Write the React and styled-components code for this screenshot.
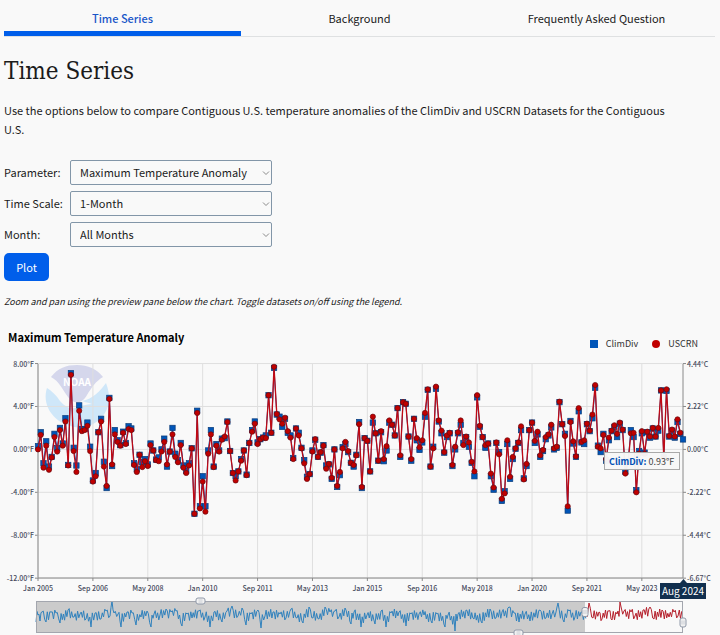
import React from 'react';
import styled, { createGlobalStyle } from 'styled-components';

const GlobalStyle = createGlobalStyle`
  * {
    box-sizing: border-box;
  }

  body {
    margin: 0;
    background: #f9f9f9;
    color: #1b1b1b;
    font-family: 'Noto Sans CJK SC', 'Noto Sans', sans-serif;
    font-size: 11px;
    line-height: 19px;
    overflow-x: hidden;
  }
`;

const tabs = ['Time Series', 'Background', 'Frequently Asked Question'];

const fields = [
  { id: 'parameter', label: 'Parameter:', options: ['Maximum Temperature Anomaly', 'Minimum Temperature Anomaly'] },
  { id: 'timescale', label: 'Time Scale:', options: ['1-Month', '3-Month', '12-Month'] },
  { id: 'month', label: 'Month:', options: ['All Months', 'January', 'February'] },
];

// Monthly anomalies in °F, one row per year from January 2005: [ClimDiv, USCRN]
const anomalies = [
  [0.3, 0], [1.6, 1.35], [-1.3, -1.7], [0.75, 0.35], [-1.6, -1.9], [-0.7, -0.75], [1.45, 1.15], [0.1, -0.2], [2, 1.8], [0.55, 0.35], [2.9, 2.6], [-1.45, -1.5],
  [7.1, 6.95], [0.15, -0.15], [-1.5, -2.1], [4.1, 3.6], [1.9, 1.7], [1.9, 1.8], [2.5, 2.2], [0.25, -0.15], [-2.9, -3], [-2.2, -2.5], [1.6, 1.6], [2.85, 2.6],
  [-1.15, -1.6], [-3.6, -3.4], [4.8, 4.7], [-1.55, -1.4], [1.8, 1.4], [0.85, 0.7], [0.4, 0.35], [1.65, 1.55], [0.6, 0.5], [2.15, 1.9], [1.95, 1.8], [-1.3, -1.45],
  [-1.85, -2.1], [-0.5, -0.5], [-1.2, -1.65], [-0.9, -1.1], [-1.4, -1.55], [0.55, 0.4], [-0.1, -0.1], [-0.95, -1], [-0.75, -1.1], [0, -0.2], [1, 0.7], [-1.6, -1.4],
  [-0.2, -0.2], [2, 1.4], [-0.4, -0.7], [-1, -1.2], [0.6, 0.4], [-1.5, -1.7], [-2, -2.2], [-1.3, -1.5], [0.1, 0.1], [-6, -6], [3.6, 3.4], [-5.3, -5.5],
  [-2.5, -3], [-5.3, -5.8], [-0.1, -0.4], [1.8, 1.4], [-1.6, -1.65], [0.5, 0.35], [-0.1, -0.2], [1, 0.9], [1.05, 1.2], [2.6, 2.55], [-0.15, -0.15], [-2.2, -2.2],
  [-2.5, -2.9], [-2.05, -2.05], [-0.9, -1.05], [-0.1, -0.1], [-2.35, -2.4], [0.6, 0.6], [1.8, 1.65], [2.6, 2.4], [0.65, 0.5], [0.95, 0.95], [1.1, 1.1], [1.3, 1.05],
  [5.05, 5.05], [1.55, 1.55], [7.6, 7.7], [3.25, 3.3], [3.05, 2.8], [2.1, 2.4], [2.85, 2.95], [1.55, 1.7], [1.3, 1.1], [-0.8, -0.9], [1.95, 1.95], [1.55, 1.3],
  [0.15, 0.1], [-1, -1.3], [-2.55, -2.75], [-2.3, -2.3], [-0.1, -0.2], [0.9, 0.95], [-0.7, -0.7], [-0.3, -0.25], [0.4, 0.35], [-1.5, -1.8], [-1.4, -1.35], [-2.75, -2.65],
  [0, 0], [-3.5, -3.4], [-2.4, -2.1], [0.2, 0.1], [0.5, 0.7], [-0.25, -0.15], [-1.25, -1.25], [-1.6, -1.45], [-0.5, -0.55], [2.55, 2.35], [-3.6, -3.5], [1.05, 1.05],
  [0.8, 0.8], [-2.05, -2.05], [2.5, 3.05], [1.5, 1.5], [-1.05, -1.05], [1.6, 1.7], [-1.1, -0.9], [-0.1, 0.3], [2.5, 2.7], [2.3, 2.3], [1.3, 1.3], [3.85, 3.85],
  [-0.7, -0.55], [4.4, 4.4], [4.25, 4.25], [1.2, 1.2], [-1.05, -0.9], [2.85, 2.85], [0.85, 1.05], [-0.05, 0.2], [0.65, 0.85], [3.05, 3.4], [5.55, 5.6], [-1.6, -1.6],
  [0.25, 0.1], [5.65, 5.85], [2.6, 2.7], [1.5, 1.75], [-0.3, -0.25], [1.15, 1.3], [1.5, 1.55], [-1.55, -1.45], [0, 0.25], [1.5, 1.6], [2.3, 2.7], [0.6, 0.4],
  [1.15, 1.2], [0.25, 0.65], [-1.25, -1.15], [-2.5, -2.05], [4.85, 5.05], [2.1, 2.2], [1.15, 1.15], [0.15, 0.4], [0.55, 0.55], [-2.5, -2.25], [-3.75, -3.55], [0.6, 0.65],
  [-0.25, -0.45], [-4.8, -4.6], [-3.9, -4.1], [0.5, 0.85], [-2.75, -2.55], [-0.9, -0.7], [0.05, 0.1], [0.6, 0.65], [1.8, 2.15], [-2.7, -2.8], [-1.55, -1.35], [1.8, 1.8],
  [2.5, 2.5], [0.6, 0.8], [1.4, 1.65], [-0.7, -0.55], [-0.15, -0.05], [0.95, 1.15], [1.3, 1.4], [2.05, 2.3], [0, 0.1], [0.15, 0.25], [4.4, 4.45], [2.35, 2.35],
  [1.45, 1.25], [-5.7, -5.3], [2.65, 2.55], [0.55, 0.75], [-0.7, -0.65], [3.55, 3.85], [0.65, 0.7], [0.5, 0.85], [2.35, 2.4], [1.7, 1.75], [2.9, 3.25], [5.75, 6],
  [0.35, 0.25], [-0.25, 0.1], [1.45, 1.35], [-1.05, -0.9], [0.85, 1.1], [1.7, 1.75], [2.1, 2.25], [1.15, 1.45], [2.4, 2.5], [1.8, 1.85], [-2.1, -2.25], [-1.1, -1.2],
  [1.8, 1.5], [1.15, 1.55], [-3.8, -4], [-0.15, -0.4], [1.5, 1.7], [-0.3, -0.4], [1.6, 1.65], [1.1, 1.2], [1.95, 2], [1.2, 1.2], [1.75, 2], [5.5, 5.5],
  [-0.7, -0.8], [5.45, 5.6], [1.2, 1.25], [1.75, 1.85], [1.1, 1.2], [2.55, 2.8], [1.45, 1.55], [0.93, null],
];

// Turning points of the full record shown in the preview pane
const recordPeaks = [
  [36, 622], [38, 615], [40, 621], [42, 612], [46, 622], [51, 612], [56, 613], [60, 623], [68, 610], [74, 617], [80, 614], [86, 619],
  [91, 627], [95, 613], [101, 619], [106, 611], [110, 616], [112, 601], [114, 613], [118, 614], [121, 627], [127, 612],
  [132, 613], [136, 625], [141, 617], [147, 611], [151, 627], [154, 614], [160, 615], [166, 609], [171, 612], [176, 611],
  [182, 626], [187, 614], [192, 618], [199, 611], [205, 617], [210, 627], [214, 612], [222, 622], [227, 611], [232, 606],
  [238, 616], [242, 608], [246, 625], [251, 614], [258, 610], [261, 628], [265, 616], [273, 612], [280, 614], [286, 618],
  [291, 609], [297, 618], [303, 623], [309, 607], [313, 618], [319, 619], [325, 607], [330, 612], [335, 611], [339, 617], [345, 608],
  [351, 624], [354, 612], [361, 627], [367, 615], [375, 624], [381, 611], [386, 627], [391, 613], [399, 612], [406, 626],
  [411, 614], [419, 614], [424, 615], [432, 623], [437, 614], [445, 627], [448, 615], [455, 631], [458, 614], [466, 610],
  [474, 619], [482, 623], [490, 609], [496, 618], [502, 612], [509, 607], [514, 613], [519, 622], [525, 614], [530, 621], [540, 610],
  [546, 618], [552, 614], [556, 612], [558, 603], [564, 622], [569, 611], [575, 617], [581, 612], [587, 617],
  [589, 603], [593, 618], [599, 612], [602, 619], [609, 611], [612, 620], [617, 614], [620, 602], [624, 611], [631, 612], [635, 616],
  [643, 610], [650, 607], [654, 619], [662, 610], [669, 617], [674, 612], [678, 616], [683, 612],
];

const LEFT = 38;
const TOP = 364;
const ZERO = 449;
const STEP = 645 / 235;
const PER_DEGREE = 10.73;

const toX = (month) => LEFT + month * STEP;
const toY = (value) => ZERO + 0.4 - value * PER_DEGREE;

const linePath = (points) => points.map(([x, y], i) => `${i ? 'L' : 'M'}${x.toFixed(1)} ${y.toFixed(1)}`).join('');

const seriesPoints = (column) =>
  anomalies
    .map((row, i) => [toX(i), row[column]])
    .filter(([, value]) => value !== null)
    .map(([x, value]) => [x, toY(value)]);

const recordLine = (from, to) => {
  const points = [];
  for (let i = 0; i < recordPeaks.length - 1; i += 1) {
    const [x0, y0] = recordPeaks[i];
    const [x1, y1] = recordPeaks[i + 1];
    if (x0 >= from && x0 < to) {
      points.push([x0, y0]);
      // short wiggles between two turning points
      const count = Math.max(1, Math.round((x1 - x0) / 1.2));
      for (let k = 1; k < count; k += 1) {
        const mid = 615 + (y0 + ((y1 - y0) * k) / count - 615) * 0.4;
        const size = 2 + ((i * 5 + k * 3) % 4);
        points.push([x0 + ((x1 - x0) * k) / count, mid + (k % 2 ? -size : size)]);
      }
    }
  }
  return linePath(points);
};

const valueTicks = [
  [8, '8.00°F', '4.44°C'],
  [4, '4.00°F', '2.22°C'],
  [0, '0.00°F', '0.00°C'],
  [-4, '-4.00°F', '-2.22°C'],
  [-8, '-8.00°F', '-4.44°C'],
  [-12, '-12.00°F', '-6.67°C'],
];

const dateTicks = [
  'Jan 2005', 'Sep 2006', 'May 2008', 'Jan 2010', 'Sep 2011', 'May 2013',
  'Jan 2015', 'Sep 2016', 'May 2018', 'Jan 2020', 'Sep 2021', 'May 2023',
];

const Handle = ({ x, y, vertical }) => (
  <g transform={`translate(${x} ${y})${vertical ? ' rotate(90)' : ''}`}>
    <rect x="-4.5" y="-3" width="9" height="6" rx="2" fill="#f2f2f2" stroke="#8f98a8" />
    <path d="M-2 -1H2M-2 1H2" stroke="#b9bec8" strokeWidth="0.7" />
  </g>
);

const Logo = () => (
  <g>
    <path d="M51 377C58 368 66 365 77 365S97 369 103 377C96 381 92 387 87 395C82 404 74 405 68 397C62 389 60 382 51 377Z" fill="#d5d7ec" />
    <path d="M47 388C52 391 56 395 60 401C66 408 72 410 79 407C82 405 86 405 92 404C86 402 84 402 82 401C93 399 100 391 106 383C111 396 110 408 102 417C93 427 80 430 67 425C51 419 42 403 47 388Z" fill="#cfe7f9" />
    <text x="77" y="386" textAnchor="middle" fontSize="10" fontWeight="700" fill="#fff">NOAA</text>
  </g>
);

const Chart = () => {
  const climDiv = seriesPoints(0);
  const uscrn = seriesPoints(1);

  return (
    <ChartSvg viewBox="0 355 720 280" role="img" aria-label="Maximum Temperature Anomaly by month">
      <Logo />

      {valueTicks.map(([value, fahrenheit, celsius]) => (
        <g key={value}>
          <path d={`M${LEFT} ${toY(value)}H683`} stroke="#dfdfdf" />
          <path d={`M35 ${toY(value)}H38M683 ${toY(value)}H686`} stroke="#8a8a8a" />
          <AxisLabel x="34" y={toY(value) + 3} textAnchor="end">{fahrenheit}</AxisLabel>
          <AxisLabel x="687" y={toY(value) + 3}>{celsius}</AxisLabel>
        </g>
      ))}

      {dateTicks.map((label, i) => (
        <g key={label}>
          <path d={`M${toX(i * 20)} ${TOP}V578`} stroke="#dfdfdf" />
          <path d={`M${toX(i * 20)} 578V581`} stroke="#8a8a8a" />
          <AxisLabel x={toX(i * 20)} y="591" textAnchor="middle">{label}</AxisLabel>
        </g>
      ))}

      <path d={`M${LEFT} ${TOP}V578H683V${TOP}`} fill="none" stroke="#8a8a8a" />

      <path d={linePath(climDiv)} fill="none" stroke="#0050b5" strokeWidth="1" />
      {climDiv.map(([x, y]) => (
        <rect key={x} x={x - 2.7} y={y - 2.7} width="5.4" height="5.4" fill="#0055b8" stroke="#0c3c78" strokeWidth="0.7" />
      ))}
      <path d={linePath(uscrn)} fill="none" stroke="#bf0a14" strokeWidth="1.3" />
      {uscrn.map(([x, y]) => (
        <circle key={x} cx={x} cy={y} r="2.6" fill="#c00000" stroke="#6b0a10" strokeWidth="0.7" />
      ))}

      <rect x="604.5" y="452.5" width="75" height="17" fill="#f7f7f7" fillOpacity="0.97" stroke="#a9a9a9" />
      <TipLabel x="609" y="465">
        <tspan fontWeight="700" fill="#0050b5">ClimDiv:</tspan> 0.93°F
      </TipLabel>

      <rect x="36" y="601.5" width="549" height="31" fill="#cbcbcb" />
      <path d={recordLine(36, 587)} fill="none" stroke="#3182bd" />
      <path d={recordLine(587, 684)} fill="none" stroke="#b5202c" />
      <rect x="36.5" y="601.5" width="646" height="31" fill="none" stroke="#a3a6ae" />
      <Handle x={200.5} y={601} />
      <Handle x={518.5} y={633} />
      <Handle x={585} y={612} vertical />
      <Handle x={683} y={622.5} vertical />

      <path d="M660 583H680L683.500 579L687 583H706V599H660Z" fill="#112f4e" />
      <DateLabel x="683" y="595" textAnchor="middle">Aug 2024</DateLabel>
    </ChartSvg>
  );
};

const App = () => (
  <>
    <GlobalStyle />
    <Page>
      <TabBar>
        {tabs.map((tab, i) => (
          <Tab key={tab} type="button" $active={i === 0}>{tab}</Tab>
        ))}
      </TabBar>

      <Title>Time Series</Title>
      <Intro>
        Use the options below to compare Contiguous U.S. temperature anomalies of the ClimDiv and USCRN Datasets for the
        Contiguous U.S.
      </Intro>

      <Options onSubmit={(event) => event.preventDefault()}>
        {fields.map(({ id, label, options }) => (
          <Field key={id}>
            <FieldLabel htmlFor={id}>{label}</FieldLabel>
            <SelectBox>
              <Select id={id}>
                {options.map((option) => (
                  <option key={option}>{option}</option>
                ))}
              </Select>
              <Chevron viewBox="0 0 8 8" aria-hidden="true">
                <path d="M1 2.500L4 5.500L7 2.500" fill="none" stroke="#8a8a8a" />
              </Chevron>
            </SelectBox>
          </Field>
        ))}
        <PlotButton type="submit">Plot</PlotButton>
      </Options>

      <Hint>Zoom and pan using the preview pane below the chart. Toggle datasets on/off using the legend.</Hint>
    </Page>

    <ChartHeader>
      <ChartTitle>Maximum Temperature Anomaly</ChartTitle>
      <Legend>
        <LegendItem type="button">
          <Swatch $color="#0055b8" />
          ClimDiv
        </LegendItem>
        <LegendItem type="button">
          <Swatch $color="#c00000" $round />
          USCRN
        </LegendItem>
      </Legend>
    </ChartHeader>
    <Chart />
  </>
);

const Page = styled.main`
  padding: 0 5px 0 4px;
`;

const TabBar = styled.nav`
  display: grid;
  grid-template-columns: repeat(3, 1fr);
  height: 37px;
  border-bottom: 1px solid #dfe1e2;
`;

const Tab = styled.button`
  height: 36px;
  padding: 6px 0 0;
  border: 0;
  border-bottom: 5px solid ${({ $active }) => ($active ? '#005eea' : 'transparent')};
  background: none;
  color: ${({ $active }) => ($active ? '#1a56c8' : '#1b1b1b')};
  font: inherit;
  font-weight: ${({ $active }) => ($active ? 500 : 400)};
  cursor: pointer;
`;

const Title = styled.h1`
  margin: 18px 0 0;
  font-family: 'DejaVu Serif Condensed', 'DejaVu Serif', serif;
  font-size: 24px;
  font-weight: 400;
  line-height: 32px;
`;

const Intro = styled.p`
  margin: 14px 0 0;
  padding-right: 36px;
`;

const Options = styled.form`
  display: flex;
  flex-direction: column;
  align-items: flex-start;
  gap: 6px;
  margin-top: 21px;
`;

const Field = styled.div`
  display: flex;
  align-items: center;
`;

const FieldLabel = styled.label`
  width: 66px;
  white-space: nowrap;
`;

const SelectBox = styled.div`
  position: relative;
`;

const Select = styled.select`
  display: block;
  width: 202px;
  height: 25px;
  padding: 0 10px 0 9px;
  appearance: none;
  border: 1px solid #8296a8;
  border-radius: 2px;
  background: #f9f9f9;
  color: inherit;
  font: inherit;
`;

const Chevron = styled.svg`
  position: absolute;
  top: 9px;
  right: 2px;
  width: 8px;
  height: 8px;
  pointer-events: none;
`;

const PlotButton = styled.button`
  width: 45px;
  height: 28px;
  padding: 0;
  border: 0;
  border-radius: 5px;
  background: #005eea;
  color: #fff;
  font: inherit;
  cursor: pointer;
`;

const Hint = styled.p`
  margin: 11px 0 0;
  font-size: 9px;
  font-style: italic;
`;

const ChartHeader = styled.header`
  display: flex;
  justify-content: space-between;
  align-items: flex-start;
  height: 27px;
  margin-top: 17px;
  padding: 0 22px 0 8px;
`;

const ChartTitle = styled.h2`
  margin: 0;
  color: #000;
  font-size: 11px;
  font-weight: 700;
`;

const Legend = styled.div`
  display: flex;
  gap: 14px;
  padding-top: 6px;
`;

const LegendItem = styled.button`
  display: flex;
  align-items: center;
  gap: 8px;
  padding: 0;
  border: 0;
  background: none;
  color: #333;
  font: inherit;
  font-size: 9px;
  cursor: pointer;
`;

const Swatch = styled.span`
  width: 8px;
  height: 8px;
  border-radius: ${({ $round }) => ($round ? '50%' : '0')};
  background: ${({ $color }) => $color};
`;

const ChartSvg = styled.svg`
  display: block;
  width: 100%;
`;

const AxisLabel = styled.text`
  fill: #464a5c;
  font-size: 7px;
  font-weight: 500;
`;

const TipLabel = styled.text`
  fill: #444;
  font-size: 9px;
`;

const DateLabel = styled.text`
  fill: #fff;
  font-size: 10px;
`;

export default App;
